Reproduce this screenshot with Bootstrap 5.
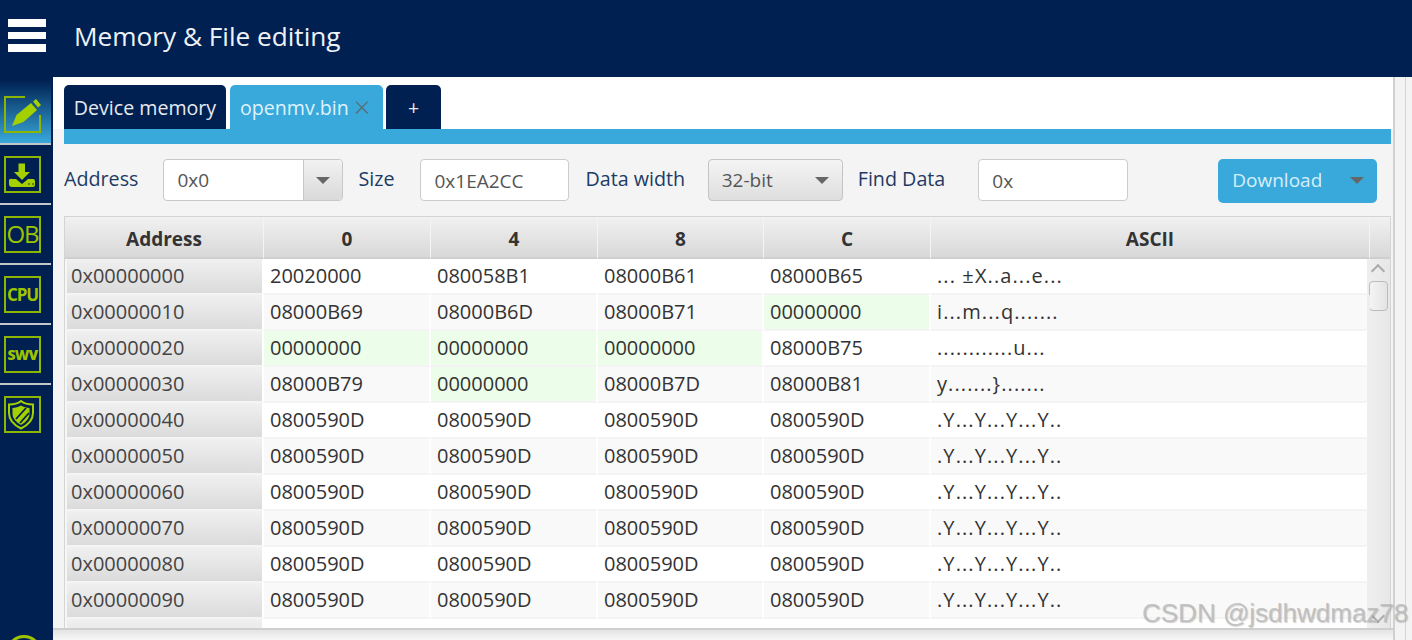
<!DOCTYPE html>
<html lang="en">
<head>
  <meta charset="UTF-8" />
  <title>Memory &amp; File editing</title>
  <link href="https://cdn.jsdelivr.net/npm/bootstrap@5.3.3/dist/css/bootstrap.min.css" rel="stylesheet" />
  <style>
    html, body { height: 640px; overflow: hidden; }
    body { font-family: "Open Sans", "Liberation Sans", sans-serif; background: #f4f4f4; color: #333; position: relative; }
    .top-bar { height: 77px; background: #002052; color: #eef2f6; padding-bottom: 5px; }
    .burger { width: 38px; margin-left: 8px; margin-right: 28px; margin-top: -1px; }
    .burger i { display: block; height: 7.5px; background: #fff; margin-bottom: 5px; }
    .burger i:last-child { margin-bottom: 0; }
    .app-title { font-size: 26.2px; line-height: 1; }
    .work-area { height: 563px; }
    .side-rail { width: 53px; background: #002052; flex: none; position: relative; }
    .rail-item { height: 60px; padding: 11px 0 0 4px; border-bottom: 2px solid #c3c7cc; width: 51px; }
    .rail-item.on { height: 68px; padding-top: 19px; background: linear-gradient(#002052 5%, #39a9dc); }
    .rail-item.last { border-bottom: 0; }
    .rail-box { width: 37px; height: 37px; border: 2px solid #8db600; color: #9ec400; text-align: center; overflow: hidden; }
    .rail-box.open-box { border: 0; }
    .rail-box svg { display: block; }
    .ob-mark { font-size: 24px; line-height: 32px; letter-spacing: -1px; }
    .cpu-mark { font-size: 17px; line-height: 34px; font-weight: 700; letter-spacing: -1.2px; }
    .swv-mark { font-size: 14px; line-height: 34px; font-weight: 800; letter-spacing: -.7px; }
    .rail-ring { position: absolute; left: 6px; top: 558px; width: 36px; height: 36px; border: 3px solid #9ec400; border-radius: 50%; }
    .main-pane { width: 1340px; flex: none; background: #f4f4f4; }
    .tab-zone { background: #fff; padding: 8px 0 0 11px; height: 52px; }
    .hex-tab { height: 44px; background: #002052; color: #e6e9ee; border-radius: 5px 5px 0 0; font-size: 19.6px; line-height: 46px; text-align: center; }
    .hex-tab.on { background: #39a9dc; color: #dff2fb; text-align: left; padding-left: 10px; }
    .tab-close { color: #5a6b78; font-size: 29px; line-height: 1; margin-left: 5px; font-weight: 300; vertical-align: -3px; }
    .tab-rule { height: 15px; background: #39a9dc; margin-left: 11px; width: 1327px; }
    .tool-row { height: 72px; padding-left: 11px; font-size: 19.7px; color: #1c3b66; }
    .tool-label { line-height: 1; margin-top: -3px; }
    .form-control.hex-input { height: 42px; border: 1px solid #ccc; border-radius: 4px; font-size: 19px; color: #555; padding: 1px 13px 0; box-shadow: none; background: #fff; }
    .combo-box { height: 42px; border: 1px solid #c8c8c8; border-radius: 4px; background: #fff; overflow: hidden; font-size: 19px; color: #555; }
    .combo-arrow { width: 39px; height: 100%; border-left: 1px solid #c8c8c8; background: linear-gradient(#f2f2f2, #d9d9d9); }
    .tri { width: 0; height: 0; border-left: 7px solid transparent; border-right: 7px solid transparent; border-top: 7px solid #666; }
    .bit-select { height: 42px; border: 1px solid #c4c4c4; border-radius: 4px; background: linear-gradient(#f4f4f4, #dedede); font-size: 19px; color: #555; padding: 0 13px; }
    .btn.load-btn { height: 44px; background: #39a9dc; color: #d6eefa; border: 0; border-radius: 5px; font-size: 19px; padding: 0 13px 0 14px; margin-top: 1px; }
    .grid-wrap { margin-left: 11px; width: 1327px; height: 412px; overflow: hidden; border: 1px solid #d4d4d4; border-bottom: 0; background: #fff; }
    .hex-grid { table-layout: fixed; border-collapse: separate; border-spacing: 0; width: 1327px; margin: 0; font-size: 20px; line-height: 1; }
    .hex-grid th { height: 42px; background: linear-gradient(#f1f1f1, #d8d8d8); border-right: 1px solid #f4f4f4; border-bottom: 2px solid #cfcfcf; font-size: 19px; color: #333; text-align: center; padding: 5px 0 0; font-weight: 700; vertical-align: middle; }
    .hex-grid td { height: 36px; padding: 0 0 1px 6px; border-right: 2px solid #fff; border-bottom: 2px solid #f4f4f4; vertical-align: middle; color: #333; background: #fff; }
    .hex-grid tr:nth-child(even) td { background: #f9f9f9; }
    .hex-grid tr td.addr-cell, .hex-grid tr:nth-child(even) td.addr-cell { background: linear-gradient(#f0f0f0, #dbdbdb); border-left: 2px solid #f6f6f6; border-right: 2px solid #fff; padding-left: 4px; color: #444; }
    .hex-grid td.zero-cell, .hex-grid tr:nth-child(even) td.zero-cell { background: #ecfdea; }
    .hex-grid td.ascii-cell { letter-spacing: 1.1px; border-right: 3px solid #eee; }
    .hex-grid td.scroll-cell { background: linear-gradient(90deg, #eee, #e6e6e6); padding: 0; border: 0; vertical-align: top; }
    .scroll-chev { width: 10px; height: 10px; border-left: 2px solid #aaa; border-top: 2px solid #aaa; transform: rotate(45deg); margin: 7px 0 5px 3px; }
    .scroll-chev.down { transform: rotate(225deg); margin-top: 300px; }
    .scroll-thumb { width: 19px; height: 30px; margin-left: -1px; border: 1px solid #bbb; border-radius: 4px; background: linear-gradient(90deg, #f4f4f4, #e4e4e4); }
    .foot-strip { height: 12px; background: linear-gradient(#e4e4e4, #f7f7f7); border-top: 2px solid #cfcfcf; }
    .edge-strip { width: 19px; flex: none; background: #f3f3f3; border-left: 2px solid #d0d0d0; }
    .edge-strip i { display: block; width: 1px; height: 100%; margin-left: 10px; background: #d4d4d4; }
    .water-mark { position: absolute; left: 1142px; top: 597px; font-family: "Liberation Sans", sans-serif; font-size: 26px; line-height: 1.3; color: rgba(185,185,185,.8); text-shadow: 1px 1px 1px rgba(120,120,120,.35); }
  </style>
</head>
<body>
  <!-- Header -->
  <header class="top-bar d-flex align-items-center">
    <div class="burger"><i></i><i></i><i></i></div>
    <span class="app-title">Memory &amp; File editing</span>
  </header>

  <div class="work-area d-flex">
    <!-- Side icons -->
    <nav class="side-rail">
      <div class="rail-item on">
        <div class="rail-box open-box">
          <svg width="37" height="37" viewBox="0 0 37 37">
            <path d="M21 1H1v35h35V19" fill="none" stroke="#8db600" stroke-width="2"/>
            <path d="M8 30l4.500-11L27 7l6 7-13.500 12z" fill="#a4d000"/>
            <path d="M29 5.500L32 3l5 6-3 2.500z" fill="#a4d000"/>
          </svg>
        </div>
      </div>
      <div class="rail-item">
        <div class="rail-box">
          <svg width="33" height="33" viewBox="2 2 33 33">
            <path d="M14.500 7.500H21V16h5l-8 8-8-8h4.500z" fill="#a4d000"/>
            <path d="M8 23h4l6 5 6-5h5a2 2 0 0 1 2 2v4a2 2 0 0 1-2 2H8a3 3 0 0 1-3-3v-3a2 2 0 0 1 3-2z" fill="#a4d000"/>
            <path d="M24 28h2M28 28h2" stroke="#4d6a1a" stroke-width="1.500"/>
          </svg>
        </div>
      </div>
      <div class="rail-item"><div class="rail-box ob-mark">OB</div></div>
      <div class="rail-item"><div class="rail-box cpu-mark">CPU</div></div>
      <div class="rail-item"><div class="rail-box swv-mark">SWV</div></div>
      <div class="rail-item last">
        <div class="rail-box">
          <svg width="33" height="33" viewBox="2 2 33 33">
            <path d="M17 5c3 2.500 7 3.500 12 3.500V17c0 7-5 12-12 15.500C10 29 5 24 5 17V8.500C10 8.500 14 7.500 17 5z" fill="none" stroke="#a4d000" stroke-width="2"/>
            <path d="M17 9.500c2.500 1.500 5.500 2.300 8.500 2.500v5.500c0 5-3.500 8.500-8.500 11.500-5-3-8.500-6.500-8.500-11.500V12c3-.2 6-1 8.500-2.500z" fill="#a4d000"/>
            <path d="M12 23l10-11M16 27l9-10" stroke="#002052" stroke-width="1.800"/>
          </svg>
        </div>
      </div>
      <div class="rail-ring"></div>
    </nav>

    <main class="main-pane">
      <div class="tab-zone d-flex">
        <div class="hex-tab" style="width:162px">Device memory</div>
        <div class="hex-tab on ms-1" style="width:153px">openmv.bin<span class="tab-close">×</span></div>
        <div class="hex-tab" style="width:55px;margin-left:3px">+</div>
      </div>
      <div class="tab-rule"></div>

      <div class="tool-row d-flex align-items-center">
        <span class="tool-label">Address</span>
        <div class="combo-box d-flex align-items-center" style="width:180px;margin-left:25px">
          <span class="flex-grow-1" style="padding-left:13px">0x0</span>
          <span class="combo-arrow d-flex align-items-center justify-content-center"><span class="tri"></span></span>
        </div>
        <span class="tool-label" style="margin-left:15px">Size</span>
        <input class="form-control hex-input" style="width:149px;margin-left:26px" value="0x1EA2CC" />
        <span class="tool-label" style="margin-left:16px">Data width</span>
        <div class="bit-select d-flex align-items-center justify-content-between" style="width:135px;margin-left:22.6px"><span>32-bit</span><span class="tri"></span></div>
        <span class="tool-label" style="margin-left:15px">Find Data</span>
        <input class="form-control hex-input" style="width:150px;margin-left:33px" value="0x" />
        <button class="btn load-btn d-flex align-items-center justify-content-between" style="width:159px;margin-left:90px"><span>Download</span><span class="tri"></span></button>
      </div>

      <div class="grid-wrap">
        <table class="hex-grid" id="hexGrid">
          <colgroup>
            <col style="width:199px"><col style="width:167px"><col style="width:167px"><col style="width:166px"><col style="width:167px"><col style="width:439px"><col style="width:22px">
          </colgroup>
          <thead>
            <tr><th>Address</th><th>0</th><th>4</th><th>8</th><th>C</th><th>ASCII</th><th></th></tr>
          </thead>
          <tbody id="hexRows"></tbody>
        </table>
      </div>
      <div class="foot-strip"></div>
    </main>
    <div class="edge-strip"><i></i></div>
  </div>

  <div class="water-mark">CSDN @jsdhwdmaz78</div>

  <script src="https://cdn.jsdelivr.net/npm/bootstrap@5.3.3/dist/js/bootstrap.bundle.min.js"></script>
  <script>
    const vec = '0800590D';
    const rows = [
      ['20020000', '080058B1', '08000B61', '08000B65', '... ±X..a...e...'],
      ['08000B69', '08000B6D', '08000B71', '00000000', 'i...m...q.......'],
      ['00000000', '00000000', '00000000', '08000B75', '............u...'],
      ['08000B79', '00000000', '08000B7D', '08000B81', 'y.......}.......']
    ];
    while (rows.length < 11) rows.push([vec, vec, vec, vec, '.Y...Y...Y...Y..']);

    const body = document.getElementById('hexRows');
    rows.forEach((r, i) => {
      const tr = document.createElement('tr');
      const addr = i < 10 ? '0x000000' + (i * 16).toString(16).toUpperCase().padStart(2, '0') : '';
      let html = `<td class="addr-cell">${addr}</td>`;
      r.forEach((v, j) => {
        const text = i < 10 ? v : '';
        let cls = j === 4 ? 'ascii-cell' : '';
        if (v === '00000000') cls = 'zero-cell';
        html += `<td class="${cls}">${text}</td>`;
      });
      if (i === 0) html += '<td class="scroll-cell" rowspan="11"><div class="scroll-chev"></div><div class="scroll-thumb"></div><div class="scroll-chev down"></div></td>';
      tr.innerHTML = html;
      body.appendChild(tr);
    });
  </script>
</body>
</html>
